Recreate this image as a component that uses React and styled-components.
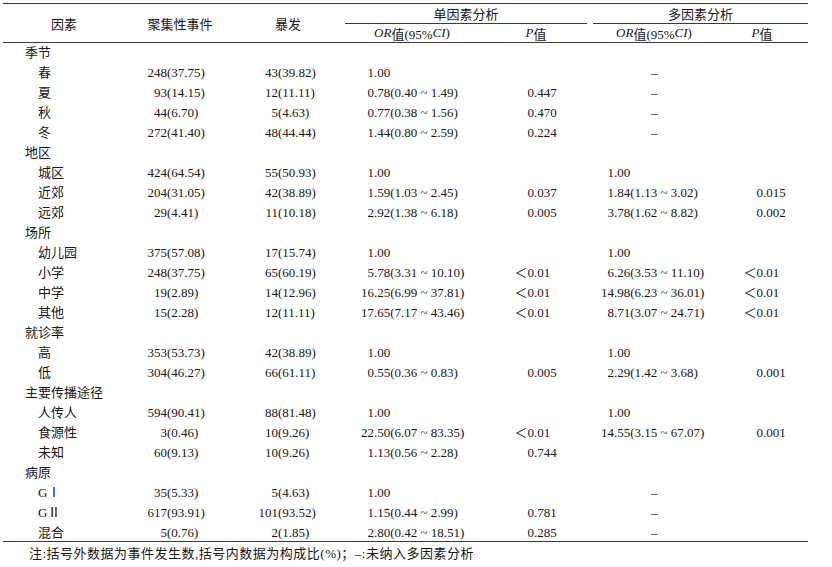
import React from 'react';
import styled, { createGlobalStyle } from 'styled-components';

const COLS = '117px 120px 105px 150px 92px 6px 127px 88px';

const Global = createGlobalStyle`
  html, body {
    margin: 0;
    padding: 0;
    background: #fff;
  }
  body {
    font-family: 'Liberation Serif', 'Noto Sans CJK SC', serif;
    font-size: 13px;
    color: #161616;
  }
`;

const Page = styled.div`
  width: 805px;
  margin: 3px 0 0 3px;
`;

const Head = styled.div`
  display: grid;
  grid-template-columns: ${COLS};
  grid-template-rows: 20px 18px;
  border-top: 1.5px solid #3a3a3a;
  border-bottom: 1px solid #3a3a3a;
`;

const HeadCell = styled.div`
  grid-column: ${p => p.$col};
  grid-row: ${p => p.$row};
  display: flex;
  align-items: center;
  justify-content: center;
  padding-left: ${p => p.$pl || 0}px;
  padding-right: ${p => p.$pr || 0}px;
  border-bottom: ${p => (p.$rule ? '1px solid #3a3a3a' : 'none')};
  white-space: nowrap;
`;

const Body = styled.div`
  border-bottom: 1.5px solid #3a3a3a;
`;

const Row = styled.div`
  display: grid;
  grid-template-columns: ${COLS};
  height: 20px;
  line-height: 20px;
  white-space: nowrap;
  &:last-child {
    height: 18px;
  }
`;

const Label = styled.div`
  padding-left: ${p => (p.$group ? 22 : 35)}px;
`;

const Cell = styled.div`
  grid-column: ${p => p.$col};
  display: flex;
`;

const Lead = styled.span`
  display: inline-block;
  width: ${p => p.$w}px;
  text-align: right;
  flex: none;
`;

const Dash = styled.span`
  padding-left: 58px;
`;

const It = styled.i`
  font-style: italic;
`;

const Note = styled.div`
  padding-left: 26px;
  line-height: 20px;
  margin-top: 2px;
  letter-spacing: 0.5px;
`;

const rows = [
  { label: '季节', group: true },
  { label: '春', a: '248(37.75)', b: '43(39.82)', or1: '1.00', or2: '–' },
  { label: '夏', a: '93(14.15)', b: '12(11.11)', or1: '0.78(0.40 ~ 1.49)', p1: '0.447', or2: '–' },
  { label: '秋', a: '44(6.70)', b: '5(4.63)', or1: '0.77(0.38 ~ 1.56)', p1: '0.470', or2: '–' },
  { label: '冬', a: '272(41.40)', b: '48(44.44)', or1: '1.44(0.80 ~ 2.59)', p1: '0.224', or2: '–' },
  { label: '地区', group: true },
  { label: '城区', a: '424(64.54)', b: '55(50.93)', or1: '1.00', or2: '1.00' },
  { label: '近郊', a: '204(31.05)', b: '42(38.89)', or1: '1.59(1.03 ~ 2.45)', p1: '0.037', or2: '1.84(1.13 ~ 3.02)', p2: '0.015' },
  { label: '远郊', a: '29(4.41)', b: '11(10.18)', or1: '2.92(1.38 ~ 6.18)', p1: '0.005', or2: '3.78(1.62 ~ 8.82)', p2: '0.002' },
  { label: '场所', group: true },
  { label: '幼儿园', a: '375(57.08)', b: '17(15.74)', or1: '1.00', or2: '1.00' },
  { label: '小学', a: '248(37.75)', b: '65(60.19)', or1: '5.78(3.31 ~ 10.10)', p1: '＜0.01', or2: '6.26(3.53 ~ 11.10)', p2: '＜0.01' },
  { label: '中学', a: '19(2.89)', b: '14(12.96)', or1: '16.25(6.99 ~ 37.81)', p1: '＜0.01', or2: '14.98(6.23 ~ 36.01)', p2: '＜0.01' },
  { label: '其他', a: '15(2.28)', b: '12(11.11)', or1: '17.65(7.17 ~ 43.46)', p1: '＜0.01', or2: '8.71(3.07 ~ 24.71)', p2: '＜0.01' },
  { label: '就诊率', group: true },
  { label: '高', a: '353(53.73)', b: '42(38.89)', or1: '1.00', or2: '1.00' },
  { label: '低', a: '304(46.27)', b: '66(61.11)', or1: '0.55(0.36 ~ 0.83)', p1: '0.005', or2: '2.29(1.42 ~ 3.68)', p2: '0.001' },
  { label: '主要传播途径', group: true },
  { label: '人传人', a: '594(90.41)', b: '88(81.48)', or1: '1.00', or2: '1.00' },
  { label: '食源性', a: '3(0.46)', b: '10(9.26)', or1: '22.50(6.07 ~ 83.35)', p1: '＜0.01', or2: '14.55(3.15 ~ 67.07)', p2: '0.001' },
  { label: '未知', a: '60(9.13)', b: '10(9.26)', or1: '1.13(0.56 ~ 2.28)', p1: '0.744' },
  { label: '病原', group: true },
  { label: 'GⅠ', a: '35(5.33)', b: '5(4.63)', or1: '1.00', or2: '–' },
  { label: 'GⅡ', a: '617(93.91)', b: '101(93.52)', or1: '1.15(0.44 ~ 2.99)', p1: '0.781', or2: '–' },
  { label: '混合', a: '5(0.76)', b: '2(1.85)', or1: '2.80(0.42 ~ 18.51)', p1: '0.285', or2: '–' },
];

// split a value at the first separator so numbers line up on it
function Aligned({ value, at, w }) {
  if (!value) return null;
  if (value === '–') return <Dash>–</Dash>;
  const i = value.indexOf(at);
  return (
    <>
      <Lead $w={w}>{value.slice(0, i)}</Lead>
      <span>{value.slice(i)}</span>
    </>
  );
}

const ORHead = () => (
  <>
    <It>OR</It>值(95%<It>CI</It>)
  </>
);

export default function App() {
  return (
    <Page>
      <Global />
      <Head>
        <HeadCell $col="1" $row="1 / 3" $pl={5}>因素</HeadCell>
        <HeadCell $col="2" $row="1 / 3">聚集性事件</HeadCell>
        <HeadCell $col="3" $row="1 / 3" $pr={9}>暴发</HeadCell>
        <HeadCell $col="4 / 6" $row="1" $rule>单因素分析</HeadCell>
        <HeadCell $col="7 / 9" $row="1" $rule>多因素分析</HeadCell>
        <HeadCell $col="4" $row="2" $pr={16}><ORHead /></HeadCell>
        <HeadCell $col="5" $row="2" $pr={10}><It>P</It>值</HeadCell>
        <HeadCell $col="7" $row="2" $pr={5}><ORHead /></HeadCell>
        <HeadCell $col="8" $row="2" $pr={4}><It>P</It>值</HeadCell>
      </Head>
      <Body>
        {rows.map((r, i) => (
          <Row key={i}>
            <Label $group={r.group}>{r.label}</Label>
            {!r.group && (
              <>
                <Cell $col="2"><Aligned value={r.a} at="(" w={47} /></Cell>
                <Cell $col="3"><Aligned value={r.b} at="(" w={38} /></Cell>
                <Cell $col="4"><Aligned value={r.or1} at="." w={29} /></Cell>
                <Cell $col="5"><Aligned value={r.p1} at="." w={39} /></Cell>
                <Cell $col="7"><Aligned value={r.or2} at="." w={21} /></Cell>
                <Cell $col="8"><Aligned value={r.p2} at="." w={43} /></Cell>
              </>
            )}
          </Row>
        ))}
      </Body>
      <Note>注:括号外数据为事件发生数,括号内数据为构成比(%)；–:未纳入多因素分析</Note>
    </Page>
  );
}
